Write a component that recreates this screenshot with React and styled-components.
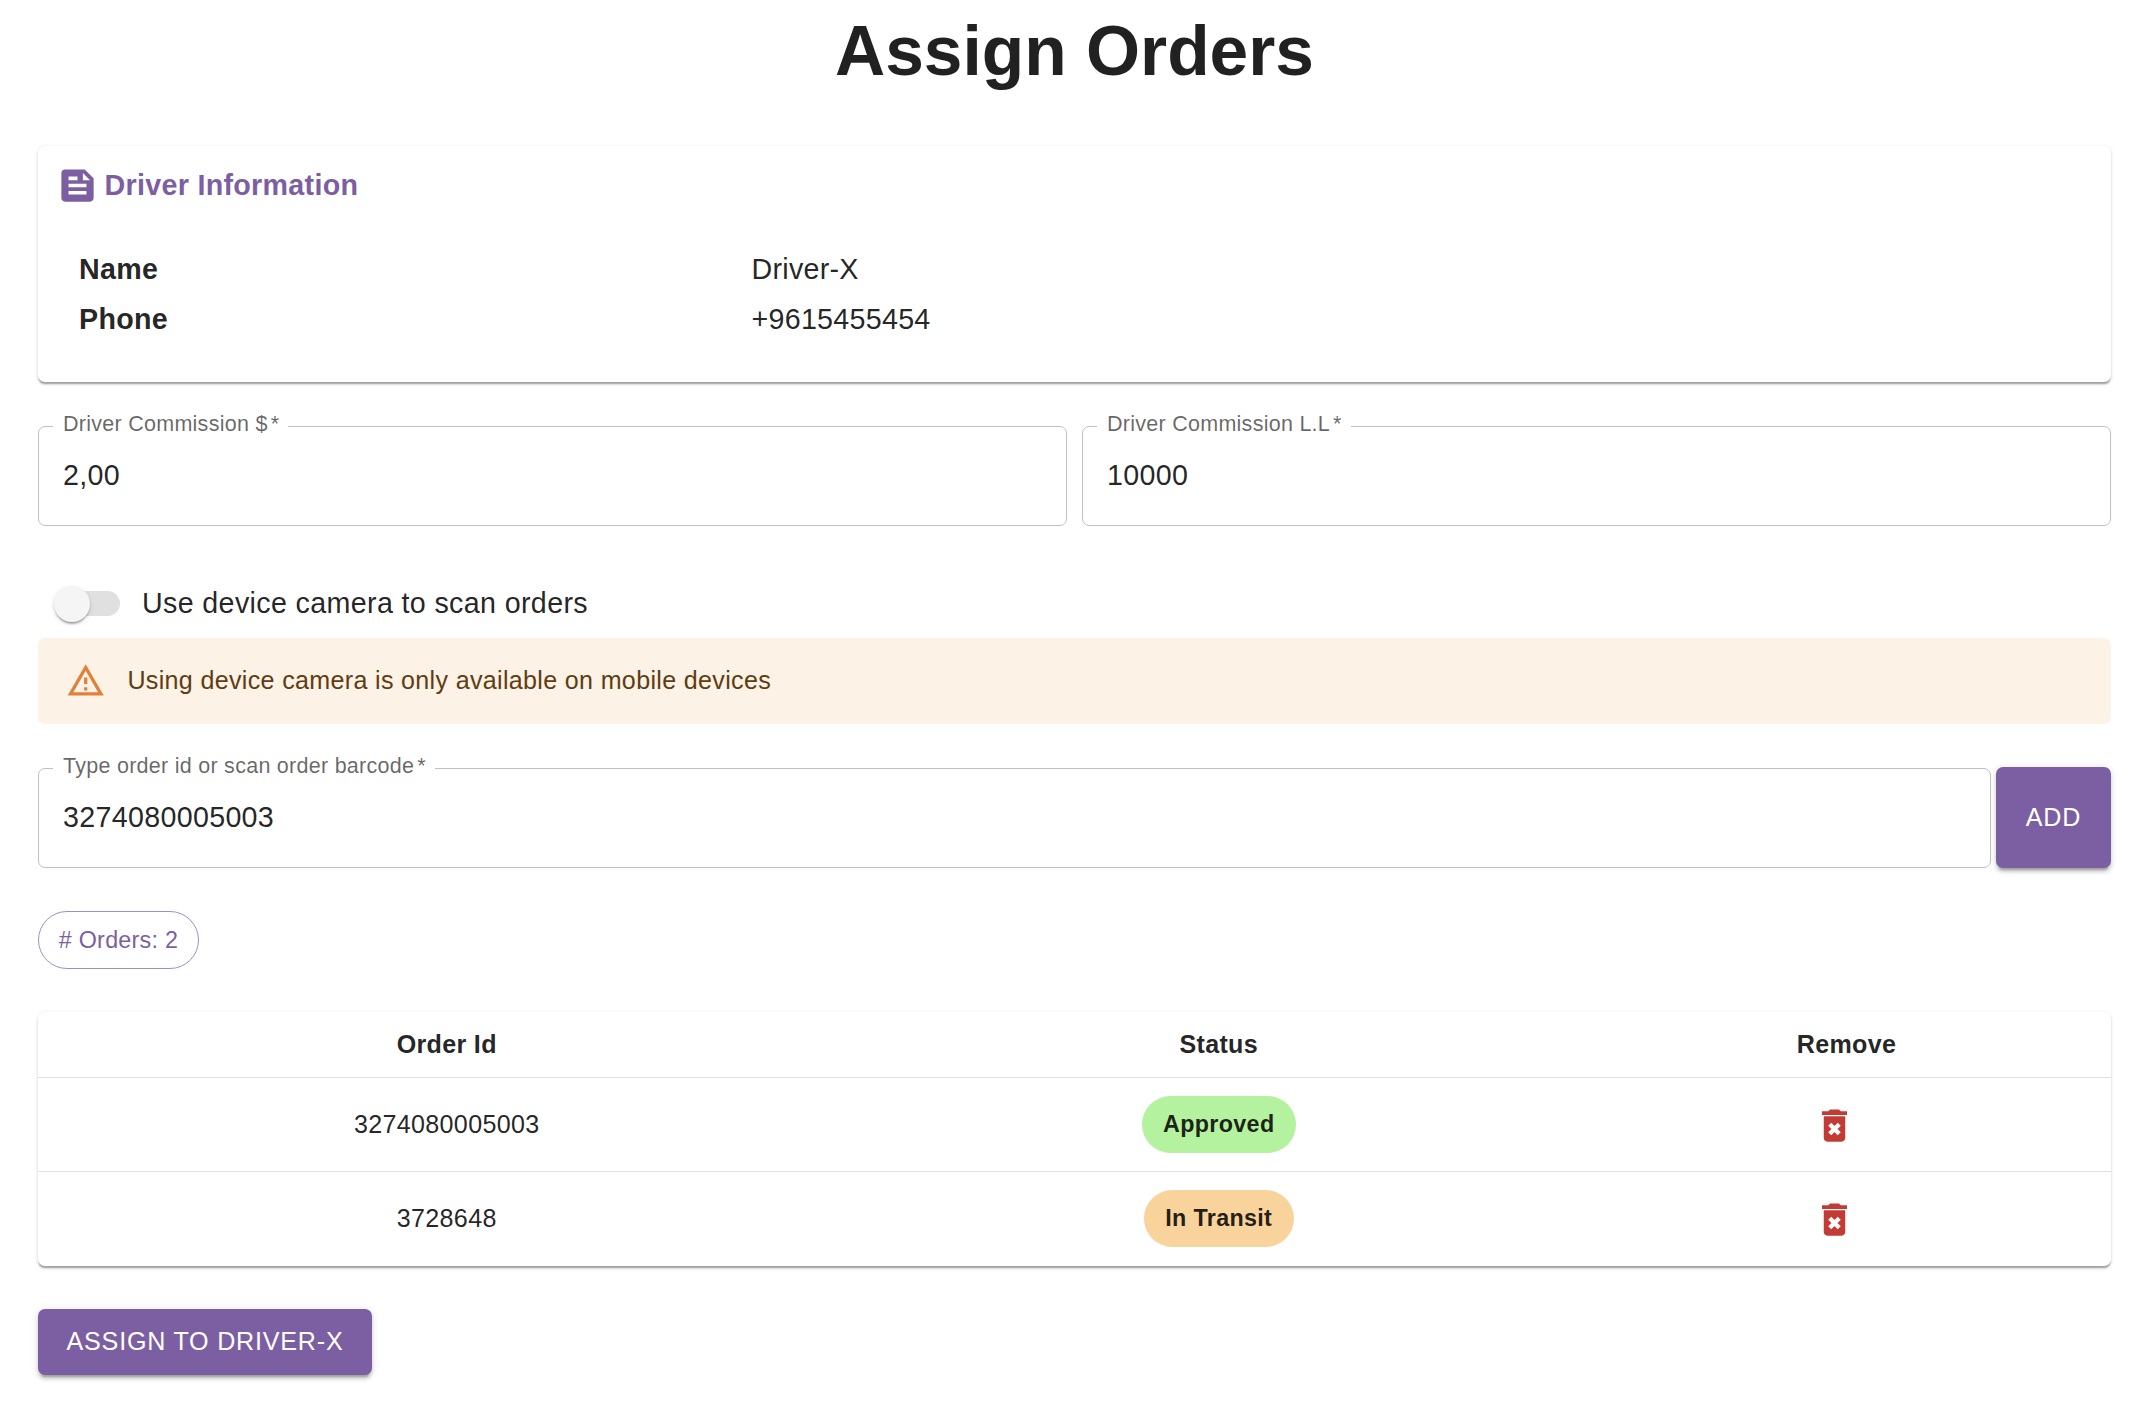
import React from 'react';
import styled, { createGlobalStyle } from 'styled-components';

const purple = '#7c5fa2';
const ink = 'rgba(0, 0, 0, 0.87)';

const GlobalStyle = createGlobalStyle`
  * { box-sizing: border-box; }
  body {
    margin: 0;
    background: #fff;
    color: ${ink};
    font-family: Helvetica, 'Liberation Sans', Arial, sans-serif;
    font-size: 28.67px;
    letter-spacing: 0.00938em;
  }
  button, input { font-family: inherit; letter-spacing: inherit; color: inherit; }
`;

const Page = styled.main`
  display: flex;
  flex-direction: column;
  width: 2134px;
  height: 1404px;
  padding: 0 23px 0 38px;
  overflow: hidden;
`;

const Heading = styled.h1`
  margin: 0;
  height: 146px;
  padding-top: 10px;
  text-align: center;
  font-size: 69.5px;
  line-height: 83px;
  letter-spacing: 0;
`;

const Paper = styled.section`
  background: #fff;
  border-radius: 7px;
  box-shadow: 0 3.6px 1.8px -1.8px rgba(0, 0, 0, 0.22),
    0 1.8px 1.8px 0 rgba(0, 0, 0, 0.15), 0 1.8px 5.4px 0 rgba(0, 0, 0, 0.09);
`;

const DriverCard = styled(Paper)`
  height: 236px;
  padding: 18px;
`;

const CardTitle = styled.h2`
  display: flex;
  align-items: center;
  gap: 5.5px;
  margin: 0;
  height: 43px;
  color: ${purple};
  font-size: 28.67px;
  letter-spacing: 0.0105em;
`;

const Icon = styled.svg`
  display: block;
  flex: none;
  width: ${(p) => p.$size}px;
  height: ${(p) => p.$size}px;
  fill: currentColor;
`;

const Details = styled.dl`
  display: grid;
  grid-template-columns: 672.5px 1fr;
  grid-auto-rows: 50px;
  align-items: center;
  margin: 37px 0 0 23px;
  dt { font-weight: 700; }
  dd { margin: 0; }
`;

const FieldRow = styled.div`
  display: flex;
  gap: ${(p) => p.$gap}px;
  margin-top: ${(p) => p.$top}px;
`;

const FieldBox = styled.div`
  position: relative;
  flex: 1;
  height: 100px;
  margin-top: ${(p) => p.$offset || 0}px;
  border: 1px solid #c0c0c0;
  border-radius: 7px;
`;

const FieldLabel = styled.label`
  position: absolute;
  top: -15px;
  left: 14px;
  display: flex;
  gap: 3px;
  padding: 0 9px 0 10px;
  background: #fff;
  color: rgba(0, 0, 0, 0.6);
  font-size: 21.5px;
  line-height: 25px;
  white-space: nowrap;
`;

const FieldInput = styled.input`
  display: block;
  width: 100%;
  height: 96px;
  padding: 0 24px;
  border: 0;
  outline: 0;
  background: transparent;
  font-size: 28.67px;
  letter-spacing: 0.0105em;
`;

const SwitchRow = styled.label`
  display: flex;
  align-items: center;
  gap: 22px;
  height: 67px;
  margin: 44px 0 1px;
  padding-left: 21px;
  letter-spacing: 0.0122em;
`;

const Track = styled.span`
  display: flex;
  align-items: center;
  width: 61px;
  height: 25px;
  border-radius: 13px;
  background: #e0e0e0;
`;

const Thumb = styled.span`
  flex: none;
  width: 36px;
  height: 36px;
  margin-left: -5px;
  border-radius: 50%;
  background: #f5f5f5;
  box-shadow: 0 3.6px 1.8px -1.8px rgba(0, 0, 0, 0.2),
    0 1.8px 1.8px 0 rgba(0, 0, 0, 0.14), 0 1.8px 5.4px 0 rgba(0, 0, 0, 0.12);
`;

const Alert = styled.div`
  display: flex;
  align-items: center;
  gap: 22px;
  height: 86px;
  padding-left: 28px;
  border-radius: 7px;
  background: #fdf2e6;
  color: #603c12;
  font-size: 25.08px;
  letter-spacing: 0.0129em;
  svg { color: #e1803c; }
`;

const AlertText = styled.span`
  padding-bottom: 1px;
`;

const Button = styled.button`
  height: ${(p) => p.$height}px;
  width: ${(p) => p.$width}px;
  padding: 0 0 ${(p) => p.$lift || 0}px;
  border: 0;
  border-radius: 7px;
  background: ${purple};
  color: #fff;
  font-size: 25.08px;
  letter-spacing: 0.032em;
  text-transform: uppercase;
  box-shadow: 0 5.4px 1.8px -3.6px rgba(0, 0, 0, 0.2),
    0 3.6px 3.6px 0 rgba(0, 0, 0, 0.14), 0 1.8px 9px 0 rgba(0, 0, 0, 0.12);
`;

const CountChip = styled.div`
  display: flex;
  align-items: center;
  justify-content: center;
  width: 161px;
  height: 58px;
  margin-top: 43px;
  border: 1px solid #a38fbe;
  border-radius: 29px;
  color: ${purple};
  font-size: 23.3px;
  letter-spacing: 0.0115em;
`;

const TablePaper = styled(Paper)`
  height: 254px;
  margin: 43px 0;
`;

const TableRow = styled.div`
  display: grid;
  grid-template-columns: 817.5px 726.5px 529px;
  align-items: center;
  justify-items: center;
  height: ${(p) => p.$height}px;
  border-bottom: 1px solid #e0e0e0;
  font-size: 25.08px;
  font-weight: ${(p) => (p.$head ? 700 : 400)};
  letter-spacing: 0.0125em;
  &:last-child { border-bottom-color: transparent; }
`;

const StatusChip = styled.span`
  display: flex;
  align-items: center;
  height: 57px;
  padding: 0 21.5px;
  border-radius: 29px;
  background: ${(p) => p.$color};
  font-size: 23.3px;
  font-weight: 700;
  letter-spacing: 0.0145em;
`;

const RemoveButton = styled.button`
  display: flex;
  padding: 0;
  margin: 1px 24px 0 0;
  border: 0;
  background: none;
  color: #c23c35;
`;

function Field({ label, value, id, offset }) {
  return (
    <FieldBox $offset={offset}>
      <FieldLabel htmlFor={id}>
        <span>{label}</span>
        <span>*</span>
      </FieldLabel>
      <FieldInput id={id} defaultValue={value} />
    </FieldBox>
  );
}

const orders = [
  { id: '3274080005003', status: 'Approved', color: '#b4f29f' },
  { id: '3728648', status: 'In Transit', color: '#f9d39c' },
];

export default function App() {
  return (
    <>
      <GlobalStyle />
      <Page>
        <Heading>Assign Orders</Heading>
        <DriverCard>
          <CardTitle>
            <Icon $size={43} viewBox="0 0 24 24">
              <path d="M16 3H5c-1.1 0-2 .9-2 2v14c0 1.1.9 2 2 2h14c1.1 0 2-.9 2-2V8l-5-5zM7 7h5v2H7V7zm10 10H7v-2h10v2zm0-4H7v-2h10v2zm-2-4V5l4 4h-4z" />
            </Icon>
            Driver Information
          </CardTitle>
          <Details>
            <dt>Name</dt>
            <dd>Driver-X</dd>
            <dt>Phone</dt>
            <dd>+9615455454</dd>
          </Details>
        </DriverCard>
        <FieldRow $gap={15} $top={44}>
          <Field id="usd" label="Driver Commission $" value="2,00" />
          <Field id="lbp" label="Driver Commission L.L" value="10000" />
        </FieldRow>
        <SwitchRow>
          <Track>
            <Thumb />
          </Track>
          Use device camera to scan orders
        </SwitchRow>
        <Alert>
          <Icon $size={39.4} viewBox="0 0 24 24">
            <path d="M12 5.99L19.53 19H4.47L12 5.99M12 2L1 21h22L12 2zm1 14h-2v2h2v-2zm0-6h-2v4h2v-4z" />
          </Icon>
          <AlertText>Using device camera is only available on mobile devices</AlertText>
        </Alert>
        <FieldRow $gap={5} $top={43}>
          <Field id="order" label="Type order id or scan order barcode" value="3274080005003" offset={1} />
          <Button $width={115} $height={101}>Add</Button>
        </FieldRow>
        <CountChip># Orders: 2</CountChip>
        <TablePaper>
          <TableRow $head $height={66}>
            <span>Order Id</span>
            <span>Status</span>
            <span>Remove</span>
          </TableRow>
          {orders.map((order) => (
            <TableRow key={order.id} $height={94}>
              <span>{order.id}</span>
              <StatusChip $color={order.color}>{order.status}</StatusChip>
              <RemoveButton aria-label="Remove">
                <Icon $size={43} viewBox="0 0 24 24">
                  <path d="M6 19c0 1.1.9 2 2 2h8c1.1 0 2-.9 2-2V6.9H6zM15.5 4l-1-1h-5l-1 1H5v2.1h14V4z" />
                  <path d="M9.35 11.35l5.3 5.3M14.65 11.35l-5.3 5.3" stroke="#fff" strokeWidth="2.4" />
                </Icon>
              </RemoveButton>
            </TableRow>
          ))}
        </TablePaper>
        <Button $width={334} $height={66} $lift={2}>Assign to Driver-X</Button>
      </Page>
    </>
  );
}
